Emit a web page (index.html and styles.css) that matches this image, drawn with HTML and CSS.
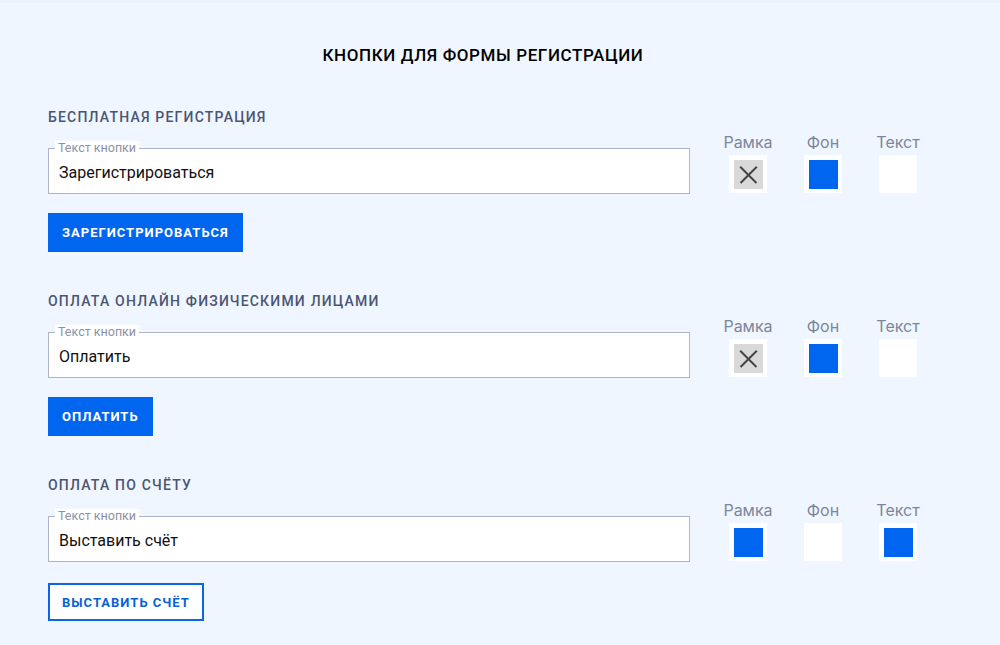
FILE: index.html
```html
<!DOCTYPE html>
<html lang="ru">
<head>
    <meta charset="UTF-8">
    <meta name="viewport" content="width=device-width, initial-scale=1.0">
    <title>Кнопки для формы регистрации</title>
    <link rel="stylesheet" href="styles.css">
</head>
<body>
    <div class="page">
        <h1 class="page-title">Кнопки для формы регистрации</h1>

        <!-- Бесплатная регистрация -->
        <section class="block">
            <h2 class="block-title">Бесплатная регистрация</h2>
            <div class="block-row">
                <label class="field">
                    <span class="field-label">Текст кнопки</span>
                    <input class="field-input" type="text" value="Зарегистрироваться">
                </label>
                <div class="swatches">
                    <div class="swatch">
                        <span class="swatch-name">Рамка</span>
                        <span class="swatch-box"><span class="swatch-color none"></span></span>
                    </div>
                    <div class="swatch">
                        <span class="swatch-name">Фон</span>
                        <span class="swatch-box"><span class="swatch-color blue"></span></span>
                    </div>
                    <div class="swatch">
                        <span class="swatch-name">Текст</span>
                        <span class="swatch-box"><span class="swatch-color white"></span></span>
                    </div>
                </div>
            </div>
            <button class="btn btn-filled">Зарегистрироваться</button>
        </section>

        <!-- Оплата онлайн -->
        <section class="block">
            <h2 class="block-title">Оплата онлайн физическими лицами</h2>
            <div class="block-row">
                <label class="field">
                    <span class="field-label">Текст кнопки</span>
                    <input class="field-input" type="text" value="Оплатить">
                </label>
                <div class="swatches">
                    <div class="swatch">
                        <span class="swatch-name">Рамка</span>
                        <span class="swatch-box"><span class="swatch-color none"></span></span>
                    </div>
                    <div class="swatch">
                        <span class="swatch-name">Фон</span>
                        <span class="swatch-box"><span class="swatch-color blue"></span></span>
                    </div>
                    <div class="swatch">
                        <span class="swatch-name">Текст</span>
                        <span class="swatch-box"><span class="swatch-color white"></span></span>
                    </div>
                </div>
            </div>
            <button class="btn btn-filled">Оплатить</button>
        </section>

        <!-- Оплата по счёту -->
        <section class="block">
            <h2 class="block-title">Оплата по счёту</h2>
            <div class="block-row">
                <label class="field">
                    <span class="field-label">Текст кнопки</span>
                    <input class="field-input" type="text" value="Выставить счёт">
                </label>
                <div class="swatches">
                    <div class="swatch">
                        <span class="swatch-name">Рамка</span>
                        <span class="swatch-box"><span class="swatch-color blue"></span></span>
                    </div>
                    <div class="swatch">
                        <span class="swatch-name">Фон</span>
                        <span class="swatch-box"><span class="swatch-color white"></span></span>
                    </div>
                    <div class="swatch">
                        <span class="swatch-name">Текст</span>
                        <span class="swatch-box"><span class="swatch-color blue"></span></span>
                    </div>
                </div>
            </div>
            <button class="btn btn-outline">Выставить счёт</button>
        </section>
    </div>
</body>
</html>
```

FILE: styles.css
```css
html, body {
    margin: 0;
    padding: 0;
}

body {
    font-family: Roboto, "Liberation Sans", sans-serif;
    background-color: #f0f6ff;
    color: #111;
}

.page {
    width: 1000px;
    height: 645px;
    box-sizing: border-box;
    padding: 0 0 0 48px;
    border-top: 3px solid #e9f1fb;
    overflow: hidden;
}

.page-title {
    width: 870px;
    margin: 42px 0 0;
    font-size: 17px;
    line-height: 20px;
    font-weight: 500;
    text-align: center;
    text-transform: uppercase;
    letter-spacing: 0.6px;
    color: #000;
}

.block {
    margin-top: 42px;
}

.block + .block {
    margin-top: 39px;
}

.block-title {
    margin: 0;
    font-size: 14px;
    line-height: 20px;
    font-weight: 500;
    text-transform: uppercase;
    letter-spacing: 1.2px;
    color: #4a5573;
}

.block-row {
    display: flex;
    align-items: flex-end;
    gap: 39px;
    margin-top: 5px;
}

.field {
    position: relative;
    display: block;
    width: 642px;
}

.field-label {
    position: absolute;
    top: -7px;
    left: 7px;
    padding: 0 3px;
    background-color: #fff;
    font-size: 12.5px;
    line-height: 13px;
    color: #8a92a6;
}

.field-input {
    display: block;
    width: 100%;
    height: 46px;
    box-sizing: border-box;
    margin: 0;
    padding: 2px 10px 0;
    border: 1px solid #aeb5c8;
    border-radius: 0;
    background-color: #fff;
    font-family: Roboto, "Liberation Sans", sans-serif;
    font-size: 16px;
    color: #111;
    outline: none;
}

.swatches {
    display: flex;
    gap: 37px;
    margin-bottom: 1px;
}

.swatch {
    display: flex;
    flex-direction: column;
    align-items: center;
    width: 38px;
}

.swatch-name {
    font-family: Inter, "Noto Sans", sans-serif;
    font-size: 16px;
    line-height: 20px;
    color: #7c869c;
    white-space: nowrap;
}

.swatch-box {
    display: flex;
    align-items: center;
    justify-content: center;
    width: 38px;
    height: 38px;
    margin-top: 3px;
    background-color: #fff;
}

.swatch-color {
    position: relative;
    display: block;
    width: 29px;
    height: 29px;
}

.swatch-color.blue {
    background-color: #0066f0;
}

.swatch-color.white {
    background-color: #fff;
}

.swatch-color.none {
    background-color: #d9d9d9;
}

.swatch-color.none::before,
.swatch-color.none::after {
    content: "";
    position: absolute;
    top: 14px;
    left: 3px;
    width: 23px;
    height: 1.5px;
    background-color: #444;
}

.swatch-color.none::before {
    transform: rotate(45deg);
}

.swatch-color.none::after {
    transform: rotate(-45deg);
}

.btn {
    display: block;
    margin-top: 19px;
    height: 39px;
    padding: 0 14px;
    border-radius: 0;
    font-family: Roboto, "Liberation Sans", sans-serif;
    font-size: 13px;
    font-weight: 700;
    text-transform: uppercase;
    letter-spacing: 1px;
    cursor: pointer;
}

.btn-filled {
    border: none;
    background-color: #0066f0;
    color: #fff;
}

.btn-outline {
    height: 38px;
    margin-top: 21px;
    border: 2px solid #0a66e6;
    background-color: #fff;
    color: #0a5fd6;
    padding: 0 12px;
}
```
